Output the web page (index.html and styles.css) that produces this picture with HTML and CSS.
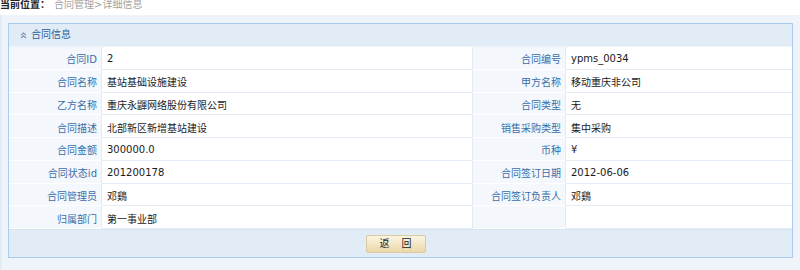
FILE: index.html
```html
<!DOCTYPE html>
<html lang="zh-CN">
<head>
<meta charset="utf-8">
<title>详细信息</title>
<link rel="stylesheet" href="styles.css">
</head>
<body>
<div class="crumb"><b class="crumb-label">当前位置：</b><span class="crumb-path">合同管理&gt;详细信息</span></div>
<div class="area">
  <div class="panel">
    <div class="panel-head">
      <svg class="chev" width="7" height="7" viewBox="0 0 7 7"><path d="M1 3.2 L3.5 1 L6 3.2 M1 6 L3.5 3.8 L6 6" fill="none" stroke="#7f93aa" stroke-width="1.1"/></svg>
      <span class="panel-title">合同信息</span>
    </div>
    <div class="grid">
      <div class="lbl">合同ID</div><div class="val">2</div>
      <div class="lbl">合同编号</div><div class="val">ypms_0034</div>
      <div class="lbl">合同名称</div><div class="val">基站基础设施建设</div>
      <div class="lbl">甲方名称</div><div class="val">移动重庆非公司</div>
      <div class="lbl">乙方名称</div><div class="val">重庆永鼲网络股份有限公司</div>
      <div class="lbl">合同类型</div><div class="val">无</div>
      <div class="lbl">合同描述</div><div class="val">北部新区新增基站建设</div>
      <div class="lbl">销售采购类型</div><div class="val">集中采购</div>
      <div class="lbl">合同金额</div><div class="val">300000.0</div>
      <div class="lbl">币种</div><div class="val">¥</div>
      <div class="lbl">合同状态id</div><div class="val">201200178</div>
      <div class="lbl">合同签订日期</div><div class="val">2012-06-06</div>
      <div class="lbl">合同管理员</div><div class="val">邓鷄</div>
      <div class="lbl">合同签订负责人</div><div class="val">邓鷄</div>
      <div class="lbl">归属部门</div><div class="val">第一事业部</div>
      <div class="lbl blank"></div><div class="val"></div>
    </div>
    <div class="panel-foot">
      <button class="btn" type="button">返 回</button>
    </div>
  </div>
</div>
</body>
</html>
```
FILE: styles.css
```css
html, body {
  margin: 0;
  padding: 0;
  background: #ffffff;
  font-family: "DejaVu Sans", "Noto Sans CJK SC", sans-serif;
  font-size: 10px;
  color: #222;
}
.crumb {
  height: 15px;
  line-height: 10px;
  white-space: nowrap;
}
.crumb-label {
  font-weight: bold;
  color: #222;
}
.crumb-path {
  color: #a0a0a0;
  margin-left: 4px;
}
.area {
  background: #eef4fa;
  height: 255px;
  padding: 8px 7px 0 6px;
  box-sizing: border-box;
  border-left: 2px solid #e2ecf7;
}
.panel {
  border: 1px solid #a9cbee;
  background: #ffffff;
}
.panel-head {
  height: 22px;
  background: #e2ecf6;
  display: flex;
  align-items: center;
  padding-left: 11px;
  gap: 4px;
  border-bottom: 1px solid #edf3fa;
}
.chev {
  display: block;
  margin-top: 1px;
}
.panel-title {
  color: #2a5d9c;
  line-height: 12px;
}
.grid {
  display: grid;
  grid-template-columns: 93px 371px 93px 1fr;
  grid-auto-rows: 22.75px;
}
.lbl, .val {
  border-bottom: 1px solid #e4edf6;
  border-right: 1px solid #e1ebf5;
  display: flex;
  align-items: center;
  white-space: nowrap;
  box-sizing: border-box;
  padding-top: 2px;
}
.lbl {
  background: #f4f8fc;
  color: #3a6ea8;
  justify-content: flex-end;
  padding-right: 4px;
  border-bottom-color: #ffffff;
}
.val {
  color: #1a1a1a;
  padding-left: 5px;
}
.val:nth-child(4n) {
  border-right: none;
}
.panel-foot {
  height: 27px;
  background: #e2ecf6;
  border-top: 1px solid #d6e4f2;
  display: flex;
  justify-content: center;
  align-items: center;
}
.btn {
  width: 60px;
  height: 18px;
  margin-right: 10px;
  margin-top: 1px;
  padding: 0;
  border: 1px solid #d9cca4;
  border-radius: 2px;
  background: linear-gradient(#fbf4e2, #ecd8a9);
  font-family: "DejaVu Sans", "Noto Sans CJK SC", sans-serif;
  font-size: 10px;
  color: #222;
  word-spacing: 9px;
  line-height: 14px;
}
```
